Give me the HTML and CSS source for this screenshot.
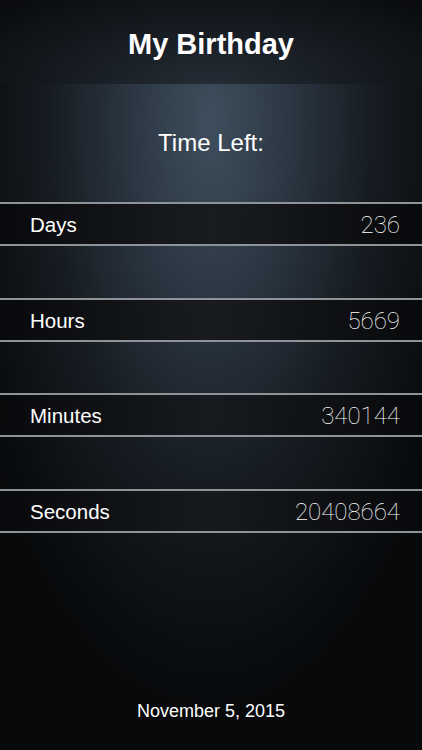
FILE: index.html
```html
<!DOCTYPE html>
<html>
<head>
<meta charset="utf-8">
<link rel="stylesheet" href="styles.css">
</head>
<body>
<div class="screen">
  <header class="navbar"><h1 class="title">My Birthday</h1></header>
  <main class="content">
    <div class="subtitle">Time Left:</div>
    <div class="rows">
      <div class="row"><span class="label">Days</span><span class="value">236</span></div>
      <div class="row"><span class="label">Hours</span><span class="value">5669</span></div>
      <div class="row"><span class="label">Minutes</span><span class="value">340144</span></div>
      <div class="row"><span class="label">Seconds</span><span class="value">20408664</span></div>
    </div>
    <div class="spacer"></div>
    <div class="date">November 5, 2015</div>
  </main>
</div>
</body>
</html>
```
FILE: styles.css
```css
html, body {
  margin: 0;
  padding: 0;
  background: #000;
}
.screen {
  width: 422px;
  height: 750px;
  display: flex;
  flex-direction: column;
  font-family: "Liberation Sans", Arial, sans-serif;
  color: #fff;
  overflow: hidden;
}
.navbar {
  height: 84px;
  flex: none;
  display: flex;
  align-items: center;
  justify-content: center;
  background: radial-gradient(ellipse 280px 110px at 50% 100%, #242c35 0%, #171c22 50%, #0a0c0f 100%);
}
.title {
  margin: 0;
  font-size: 29px;
  font-weight: bold;
  padding-top: 4px;
}
.content {
  flex: 1;
  display: flex;
  flex-direction: column;
  background: radial-gradient(ellipse 260px 580px at 50% 40px, #3f4e5d 0%, #2c3743 30%, #161c22 62%, #07090b 100%);
}
.subtitle {
  text-align: center;
  font-size: 24px;
  margin-top: 45px;
  height: 28px;
  line-height: 28px;
}
.rows {
  margin-top: 45px;
  display: flex;
  flex-direction: column;
  gap: 51.7px;
}
.row {
  box-sizing: border-box;
  height: 44px;
  border-top: 2px solid #8f9398;
  border-bottom: 2px solid #8f9398;
  background: linear-gradient(to right, rgba(8,9,11,0.95), rgba(22,25,29,0.92) 50%, rgba(8,9,11,0.95));
  display: flex;
  align-items: center;
  justify-content: space-between;
  padding: 2px 22px 0 30px;
}
.label {
  font-size: 20.5px;
}
.value {
  font-family: Roboto, "Liberation Sans", sans-serif;
  font-weight: 100;
  font-size: 24px;
  color: #ffffff;
}
.spacer {
  flex: 1;
}
.date {
  text-align: center;
  font-size: 18px;
  margin-bottom: 28px;
}
```
